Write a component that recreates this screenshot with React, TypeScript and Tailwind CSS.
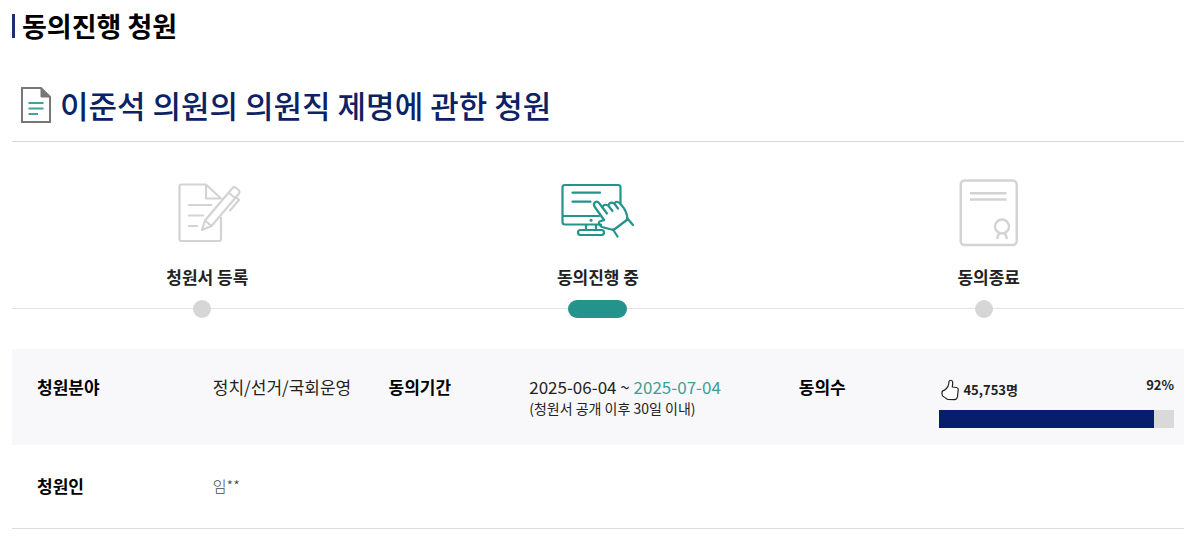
import React from 'react';

const petition = {
  title: '이준석 의원의 의원직 제명에 관한 청원',
  category: '정치/선거/국회운영',
  startDate: '2025-06-04',
  endDate: '2025-07-04',
  author: '임**',
  agreed: 45753,
  goal: 50000,
};

const DocumentIcon = () => (
  <svg width="30" height="36" viewBox="0 0 30 36" fill="none" className="shrink-0" aria-hidden="true">
    <path d="M1 1H20L29 10V35H1Z" fill="#fff" stroke="#777" strokeWidth="2" />
    <path d="M20 1V10H29Z" fill="#777" stroke="#777" />
    <path d="M7.500 16H22.500M7.500 21.500H22.500M7.500 27H17" stroke="#3fa39b" strokeWidth="2" />
  </svg>
);

const WriteIcon = () => (
  <svg width="80" height="72" viewBox="0 0 80 72" fill="none" stroke="currentColor" strokeWidth="2.2" strokeLinejoin="round" aria-hidden="true">
    <path d="M54 40V62Q54 64 52 64H14.500Q12.500 64 12.500 62V9.500Q12.500 7.500 14.500 7.500H39L54 21.500H39V7.500" />
    <path d="M21 28H45M21 38.500H37M21 49H31" />
    <path d="M35 53L38 43.500L65.500 11Q67 9.500 68.500 10.500L72 13.500Q73 15 72 16.500L44.500 49Z" />
    <path d="M38 43.500L44.500 49M61.500 15.500L68 21" />
    <path d="M69 20L72 23L63 33.500" strokeLinecap="round" />
  </svg>
);

const MonitorIcon = () => (
  <svg width="80" height="72" viewBox="0 0 80 72" fill="none" stroke="currentColor" strokeWidth="2.200" strokeLinejoin="round" strokeLinecap="round" aria-hidden="true">
    <path d="M62.500 26V10.500Q62.500 8 60 8H7Q4.500 8 4.500 10.500V45Q4.500 47.500 7 47.500H43M4.500 39H41" />
    <path d="M14.500 15.700H42M14.500 24.700H32.500" />
    <path d="M28 48V53M38 48V53" />
    <rect x="20" y="53" width="26" height="5" rx="2.500" />
    <circle cx="33" cy="43.300" r="1.500" fill="currentColor" stroke="none" />
    <path d="M46 43L36.500 29.500C34.500 26 38.500 23 41 26L49 36.500" />
    <path d="M46 43L41.500 44.500C40 46 41 48 44 50L55.500 53L69.500 42.500C69.500 37 67 32 63 27.500C60 24 58 24 56.500 26.500" />
    <path d="M44.500 30.500C45.500 27 49 27 51 29.500L54.500 34M50.500 28.500C51.500 24.500 55.500 25 57 27.500L60 31.500" />
    <path d="M69 41L75 48M55 52.500L59.500 59.500" />
  </svg>
);

const CertificateIcon = () => (
  <svg width="80" height="72" viewBox="0 0 80 72" fill="none" stroke="currentColor" strokeWidth="2.400" aria-hidden="true">
    <rect x="11.700" y="3.500" width="56" height="64.500" rx="4" />
    <path d="M21 16.300H57.500M21 22.500H57.500" />
    <circle cx="53" cy="49.500" r="7" />
    <path d="M50 56L48 62M56 56L58 62" />
  </svg>
);

const ThumbIcon = () => (
  <svg width="18" height="22" viewBox="0 0 18 22" fill="#fff" stroke="#222" strokeWidth="1.200" strokeLinejoin="round" aria-hidden="true">
    <path d="M8 2.500C8.500 .8 11 .8 11.500 2.500C12 4 11.500 6 11.300 8L15.500 8.500Q17.500 9 17.200 11L16.500 17.500Q16 20.500 13.500 20.700L7 20.500C5 20 4.500 18.500 3 18C1.500 17.500 1 16.500 1 15V13.500C1 12 2 11.500 3.500 11.200C6 9.500 8 7 8 2.500Z" />
  </svg>
);

const steps = [
  { label: '청원서 등록', Icon: WriteIcon, active: false },
  { label: '동의진행 중', Icon: MonitorIcon, active: true },
  { label: '동의종료', Icon: CertificateIcon, active: false },
];

export default function App() {
  const percent = (petition.agreed / petition.goal) * 100;

  return (
    <main className="bg-white pt-1.5 pr-4 pb-2 pl-3 font-['Noto_Sans_CJK_KR',sans-serif] text-black">
      <div className="flex h-10 items-center gap-[7px]">
        <span className="h-6 w-[3px] bg-[#17306f]" />
        <h1 className="text-[27px] leading-10 font-bold">동의진행 청원</h1>
      </div>

      <div className="mt-[27px] flex items-center gap-[9px] border-b border-[#d9d9d9] px-[9px] pt-2.5 pb-3.5">
        <DocumentIcon />
        <h2 className="text-[31px] leading-[44px] font-medium text-[#0b2265]">{petition.title}</h2>
      </div>

      {/* Progress steps */}
      <ol className="mt-[35px] grid grid-cols-3">
        {steps.map(({ label, Icon, active }) => (
          <li key={label} className="flex flex-col items-center" aria-current={active ? 'step' : undefined}>
            <div className={active ? 'text-[#24938b]' : 'text-[#d3d3d3]'}>
              <Icon />
            </div>
            <p className="mt-4 text-[17px] leading-6 font-bold text-[#222]">{label}</p>
            <div className="mt-[19px] w-full border-t border-[#e2e2e2]" />
            <span className={`-mt-[9px] h-[18px] rounded-full ${active ? 'w-[59px] bg-[#24938b]' : 'mr-2.5 w-[18px] bg-[#d6d6d6]'}`} />
          </li>
        ))}
      </ol>

      {/* Petition details */}
      <table className="mt-[31px] w-full table-fixed border-b border-[#dcdcdc] text-left text-[17px] leading-[26px]">
        <colgroup>
          <col className="w-[15%]" />
          <col className="w-[15%]" />
          <col className="w-[12%]" />
          <col className="w-[23%]" />
          <col className="w-[12%]" />
          <col className="w-[23%]" />
        </colgroup>
        <tbody>
          <tr className="bg-[#f8f8fb] align-top">
            <th scope="row" className="pt-[25px] pl-[25px] font-bold">청원분야</th>
            <td className="pt-[25px] pl-[25px] whitespace-nowrap text-[#222]">{petition.category}</td>
            <th scope="row" className="pt-[25px] pl-[25px] font-bold">동의기간</th>
            <td className="pt-[25px] pl-[25px] whitespace-nowrap text-[#222]">
              <p>
                {petition.startDate} ~ <span className="text-[#3d9f93]">{petition.endDate}</span>
              </p>
              <p className="text-sm leading-4">(청원서 공개 이후 30일 이내)</p>
            </td>
            <th scope="row" className="pt-[25px] pl-[25px] font-bold">동의수</th>
            <td className="pt-[25px] pr-2.5 pb-[17px] pl-[25px]">
              <div className="flex h-9 items-start justify-between text-[13px] font-bold text-[#222]">
                <span className="flex h-8 items-center gap-1 pl-0.5">
                  <ThumbIcon />
                  {petition.agreed.toLocaleString('en-US')}명
                </span>
                <span className="leading-[22px]">{Math.round(percent)}%</span>
              </div>
              <div
                className="h-[18px] bg-[#d9d9d9]"
                role="progressbar"
                aria-label="동의수"
                aria-valuenow={Math.round(percent)}
                aria-valuemin={0}
                aria-valuemax={100}
              >
                <div className="h-full bg-[#061e6c]" style={{ width: `${percent}%` }} />
              </div>
            </td>
          </tr>
          <tr>
            <th scope="row" className="pt-7 pb-[29px] pl-[25px] font-bold">청원인</th>
            <td colSpan={5} className="pt-7 pb-[29px] pl-[25px] text-[15px] font-light text-[#444]">{petition.author}</td>
          </tr>
        </tbody>
      </table>
    </main>
  );
}
